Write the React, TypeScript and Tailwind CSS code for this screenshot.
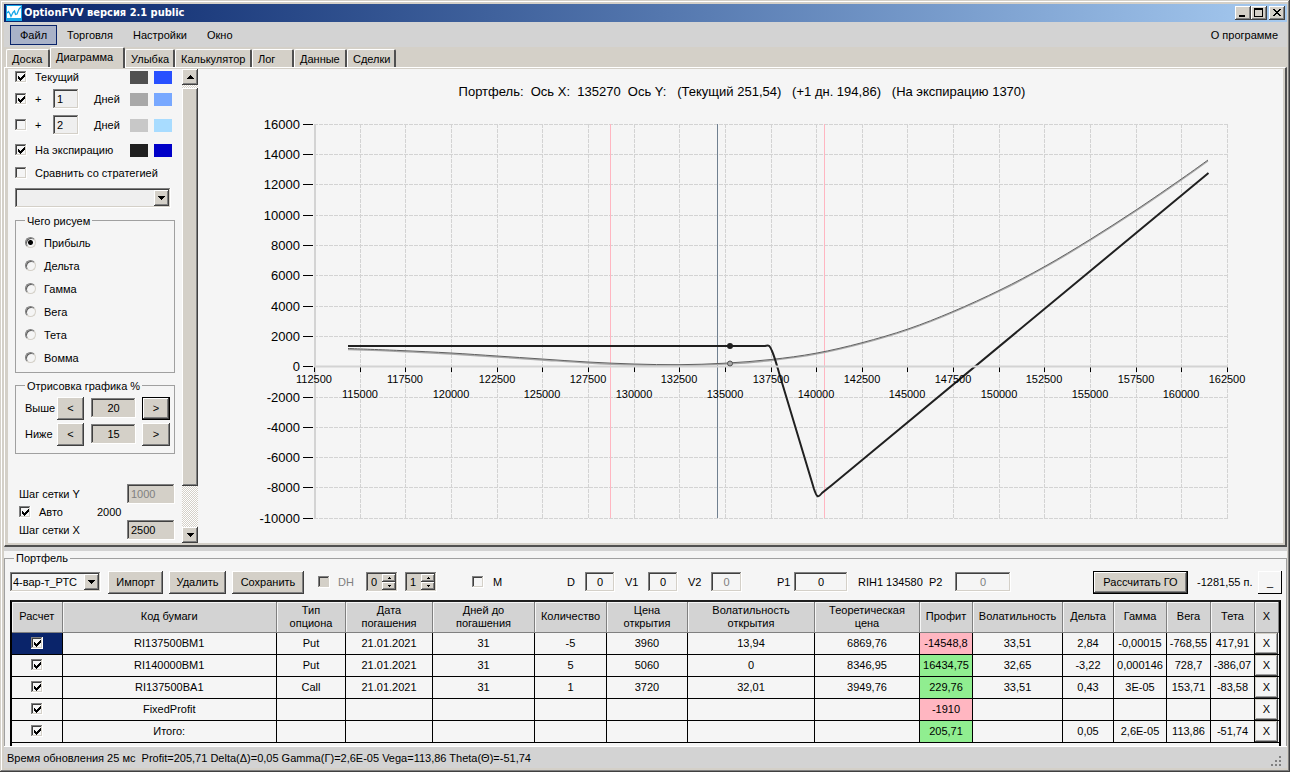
import { useState } from "react";
import type { ReactNode } from "react";
import { clsx } from "clsx";

const RAISED =
  "bg-[#d4d0c8] shadow-[inset_-1px_-1px_#404040,inset_1px_1px_#fff,inset_-2px_-2px_#808080,inset_2px_2px_#d4d0c8]";
const DEFAULT_BTN =
  "bg-[#d4d0c8] border border-black shadow-[inset_-1px_-1px_#404040,inset_1px_1px_#fff,inset_-2px_-2px_#808080]";
const SUNKEN =
  "shadow-[inset_-1px_-1px_#fff,inset_1px_1px_#808080,inset_-2px_-2px_#d4d0c8,inset_2px_2px_#404040]";

const MENU = ["Файл", "Торговля", "Настройки", "Окно"];

const TABS = [
  { name: "Доска", width: "w-11" },
  { name: "Диаграмма", width: "w-[75px]" },
  { name: "Улыбка", width: "w-[50px]" },
  { name: "Калькулятор", width: "w-[77px]" },
  { name: "Лог", width: "w-[42px]" },
  { name: "Данные", width: "w-[53px]" },
  { name: "Сделки", width: "w-[49px]" },
];

const MODES = ["Прибыль", "Дельта", "Гамма", "Вега", "Тета", "Вомма"];

const COLUMNS = [
  { title: "Расчет", width: "w-[50px]" },
  { title: "Код бумаги", width: "w-auto" },
  { title: "Тип\nопциона", width: "w-[69px]" },
  { title: "Дата\nпогашения", width: "w-[87px]" },
  { title: "Дней до\nпогашения", width: "w-[102px]" },
  { title: "Количество", width: "w-[72px]" },
  { title: "Цена\nоткрытия", width: "w-[81px]" },
  { title: "Волатильность\nоткрытия", width: "w-[127px]" },
  { title: "Теоретическая\nцена", width: "w-[105px]" },
  { title: "Профит", width: "w-[53px]" },
  { title: "Волатильность", width: "w-[90px]" },
  { title: "Дельта", width: "w-[51px]" },
  { title: "Гамма", width: "w-[53px]" },
  { title: "Вега", width: "w-[44px]" },
  { title: "Тета", width: "w-[44px]" },
  { title: "X", width: "w-[24px]" },
];

const ROWS = [
  ["RI137500BM1", "Put", "21.01.2021", "31", "-5", "3960", "13,94", "6869,76", "-14548,8", "33,51", "2,84", "-0,00015", "-768,55", "417,91"],
  ["RI140000BM1", "Put", "21.01.2021", "31", "5", "5060", "0", "8346,95", "16434,75", "32,65", "-3,22", "0,000146", "728,7", "-386,07"],
  ["RI137500BA1", "Call", "21.01.2021", "31", "1", "3720", "32,01", "3949,76", "229,76", "33,51", "0,43", "3E-05", "153,71", "-83,58"],
  ["FixedProfit", "", "", "", "", "", "", "", "-1910", "", "", "", "", ""],
  ["Итого:", "", "", "", "", "", "", "", "205,71", "", "0,05", "2,6E-05", "113,86", "-51,74"],
];
const PROFIT = 8;

interface CheckboxProps {
  id: string;
  label?: string;
  checked?: boolean;
  disabled?: boolean;
}

function Checkbox({ id, label, checked = false, disabled }: CheckboxProps) {
  const [on, setOn] = useState(checked);
  return (
    <span className="inline-grid size-3 shrink-0">
      <input
        id={id}
        type="checkbox"
        aria-label={label}
        checked={on}
        disabled={disabled}
        onChange={() => setOn(!on)}
        className={clsx("col-start-1 row-start-1 size-3 appearance-none", SUNKEN, disabled ? "bg-[#d4d0c8]" : "bg-[#f5f5f5]")}
      />
      {on && (
        <svg viewBox="0 0 12 12" className="pointer-events-none col-start-1 row-start-1 size-3" fill="#000" shapeRendering="crispEdges">
          <path d="M3 5h1v3h-1zM4 6h1v3h-1zM5 7h1v3h-1zM6 6h1v3h-1zM7 5h1v3h-1zM8 4h1v3h-1zM9 3h1v3h-1z" />
        </svg>
      )}
    </span>
  );
}

function Arrow({ up }: { up?: boolean }) {
  return (
    <svg width="7" height="4" viewBox="0 0 7 4" shapeRendering="crispEdges">
      <path d={up ? "M3 0h1v1h1v1h1v1h1v1h-7v-1h1v-1h1v-1h1z" : "M0 0h7v1h-1v1h-1v1h-1v1h-1v-1h-1v-1h-1v-1h-1z"} />
    </svg>
  );
}

function Combo({ label, options, className }: { label: string; options: string[]; className?: string }) {
  return (
    <span className={clsx("relative inline-flex h-5", className)}>
      <select aria-label={label} className={clsx("w-full appearance-none bg-transparent pl-[3px] pr-4 outline-none", SUNKEN)}>
        {options.map((o) => (
          <option key={o}>{o}</option>
        ))}
      </select>
      <span className={clsx("pointer-events-none absolute right-[2px] top-[2px] bottom-[2px] flex w-[15px] items-center justify-center", RAISED)}>
        <Arrow />
      </span>
    </span>
  );
}

function Field({ id, value, label, className, disabled }: { id: string; value: string; label?: string; className?: string; disabled?: boolean }) {
  return (
    <input
      id={id}
      type="text"
      aria-label={label}
      defaultValue={value}
      disabled={disabled}
      className={clsx("h-5 min-w-0 shrink-0 px-1 outline-none disabled:text-[#808080]", SUNKEN, className)}
    />
  );
}

function Button({ children, className, label }: { children: ReactNode; className?: string; label?: string }) {
  return (
    <button type="button" aria-label={label} className={clsx("flex h-[23px] shrink-0 items-center justify-center pb-px", className)}>
      {children}
    </button>
  );
}

function Spinner({ value, label }: { value: string; label: string }) {
  return (
    <span className={clsx("flex h-5 w-8 bg-[#d4d0c8] p-[2px]", SUNKEN)}>
      <input type="text" aria-label={label} defaultValue={value} className="w-[14px] min-w-0 bg-transparent pl-[3px] outline-none" />
      <span className="flex flex-1 flex-col">
        <button type="button" aria-label={`${label} +`} className={clsx("flex flex-1 items-center justify-center", RAISED)}>
          <svg width="3" height="2" viewBox="0 0 3 2" shapeRendering="crispEdges"><path d="M1 0h1v1h1v1h-3v-1h1z" /></svg>
        </button>
        <button type="button" aria-label={`${label} -`} className={clsx("flex flex-1 items-center justify-center", RAISED)}>
          <svg width="3" height="2" viewBox="0 0 3 2" shapeRendering="crispEdges"><path d="M0 0h3v1h-1v1h-1v-1h-1z" /></svg>
        </button>
      </span>
    </span>
  );
}

function TitleBar() {
  return (
    <header className="flex h-[18px] items-center bg-linear-to-r from-[#0a246a] to-[#a6caf0] px-[2px]">
      <svg width="16" height="16" viewBox="0 0 16 16" className="mr-[2px]">
        <rect width="16" height="16" fill="#18a8e8" />
        <rect x="1" y="1" width="14" height="12" fill="#fff" />
        <path d="M1 8l1.500-1.500L4 9l1 2.500 2-4L8.500 6l1 3.500L11 9l2-5 2-2" fill="none" stroke="#18a8e8" strokeWidth="1.3" />
      </svg>
      <h1 className="font-['DejaVu_Sans_Condensed','DejaVu_Sans',sans-serif] text-[11px] font-bold text-white">
        OptionFVV версия 2.1 public
      </h1>
      <div className="ml-auto flex">
        <button type="button" aria-label="Свернуть" className={clsx("h-[14px] w-4", RAISED)}>
          <svg viewBox="0 0 16 14" shapeRendering="crispEdges"><path d="M4 9h6v2H4z" /></svg>
        </button>
        <button type="button" aria-label="Развернуть" className={clsx("h-[14px] w-4", RAISED)}>
          <svg viewBox="0 0 16 14" shapeRendering="crispEdges"><path d="M3 2h9v9H3zM4 4v6h7V4z" fillRule="evenodd" /></svg>
        </button>
        <button type="button" aria-label="Закрыть" className={clsx("ml-[2px] h-[14px] w-4", RAISED)}>
          <svg viewBox="0 0 16 14" shapeRendering="crispEdges">
            <path d="M4 3h2v1h1v1h2v-1h1v-1h2v1h-1v1h-1v1h-1v1h1v1h1v1h1v1h-2v-1h-1v-1h-2v1h-1v1h-2v-1h1v-1h1v-1h1v-1h-1v-1h-1v-1h-1z" />
          </svg>
        </button>
      </div>
    </header>
  );
}

function MenuBar() {
  return (
    <nav className="flex h-[25px] items-center bg-[#d3d3d3] px-[6px] text-[11px]">
      {MENU.map((m, i) => (
        <button
          key={m}
          type="button"
          className={clsx("h-5 border px-[9px]", i === 0 ? "border-[#0a246a] bg-[#a9b2c8]" : "border-transparent")}
        >
          {m}
        </button>
      ))}
      <button type="button" className="ml-auto h-5 px-[3px]">О программе</button>
    </nav>
  );
}

function Swatches({ gray, blue }: { gray: string; blue: string }) {
  return (
    <span className="ml-auto mr-[10px] flex gap-[6px]">
      <span className={clsx("h-[13px] w-[18px]", gray)} />
      <span className={clsx("h-[13px] w-[18px]", blue)} />
    </span>
  );
}

function RangeRow({ name, value, focused }: { name: string; value: string; focused?: boolean }) {
  return (
    <div className="flex h-[26px] items-center">
      <label htmlFor={name} className="w-8">{name}</label>
      <Button label={`${name} меньше`} className={clsx("w-[27px]", RAISED)}>&lt;</Button>
      <Field id={name} value={value} className="ml-[7px] w-[45px] bg-[#d4d0c8] text-center" />
      <Button label={`${name} больше`} className={clsx("ml-[6px] w-7", focused ? DEFAULT_BTN : RAISED)}>&gt;</Button>
    </div>
  );
}

function Sidebar() {
  const [mode, setMode] = useState(MODES[0]);
  return (
    <aside className="flex w-[174px] shrink-0 flex-col pl-[7px]">
      <div className="flex h-4 items-center">
        <Checkbox id="current" checked />
        <label htmlFor="current" className="pl-2">Текущий</label>
        <Swatches gray="bg-[#505050]" blue="bg-[#2850ff]" />
      </div>
      <div className="mt-px flex h-[26px] items-center">
        <Checkbox id="plus1" checked />
        <label htmlFor="plus1" className="w-[26px] pl-2">+</label>
        <Field id="days1" value="1" className="w-[26px] bg-[#efefef]" />
        <label htmlFor="days1" className="pl-[15px]">Дней</label>
        <Swatches gray="bg-[#a8a8a8]" blue="bg-[#78a8ff]" />
      </div>
      <div className="flex h-[26px] items-center">
        <Checkbox id="plus2" />
        <label htmlFor="plus2" className="w-[26px] pl-2">+</label>
        <Field id="days2" value="2" className="w-[26px] bg-[#efefef]" />
        <label htmlFor="days2" className="pl-[15px]">Дней</label>
        <Swatches gray="bg-[#c8c8c8]" blue="bg-[#a8dcff]" />
      </div>
      <div className="flex h-6 items-center">
        <Checkbox id="expiry" checked />
        <label htmlFor="expiry" className="pl-2">На экспирацию</label>
        <Swatches gray="bg-[#202020]" blue="bg-[#0000c8]" />
      </div>
      <div className="flex h-[22px] items-center">
        <Checkbox id="compare" />
        <label htmlFor="compare" className="pl-2">Сравнить со стратегией</label>
      </div>
      <Combo label="Стратегия" options={[""]} className="mt-1 w-[156px] bg-[#efefef]" />

      <fieldset className="mt-[5px] w-40 min-w-0 border border-[#a0a0a0] px-[9px] pb-[3px] pt-1">
        <legend className="px-[2px] pt-[2px] leading-3">Чего рисуем</legend>
        {MODES.map((m) => (
          <label key={m} className="flex h-[23px] items-center gap-2">
            <input
              type="radio"
              name="mode"
              checked={mode === m}
              onChange={() => setMode(m)}
              className="size-[11px] appearance-none rounded-full border border-[#808080] border-r-[#d4d0c8] border-b-[#d4d0c8] bg-[#f5f5f5] shadow-[inset_1px_1px_#606060] checked:bg-[radial-gradient(circle,#000_2px,#f5f5f5_3px)]"
            />
            {m}
          </label>
        ))}
      </fieldset>

      <fieldset className="mt-[5px] w-40 min-w-0 border border-[#a0a0a0] pb-[6px] pl-[9px] pr-1 pt-[3px]">
        <legend className="px-[2px] pt-[2px] leading-3">Отрисовка графика %</legend>
        <RangeRow name="Выше" value="20" focused />
        <RangeRow name="Ниже" value="15" />
      </fieldset>

      <div className="mt-[30px] flex w-40 items-center justify-between pl-1">
        <label htmlFor="stepY">Шаг сетки Y</label>
        <Field id="stepY" value="1000" disabled className="w-12 bg-[#d4d0c8]" />
      </div>
      <div className="flex h-4 items-center pl-1">
        <Checkbox id="auto" checked />
        <label htmlFor="auto" className="w-[66px] pl-2">Авто</label>
        <span>2000</span>
      </div>
      <div className="flex w-40 items-center justify-between pl-1">
        <label htmlFor="stepX">Шаг сетки X</label>
        <Field id="stepX" value="2500" className="w-12 bg-[#d4d0c8]" />
      </div>
    </aside>
  );
}

function ScrollBar() {
  return (
    <div className="flex w-4 shrink-0 flex-col bg-[repeating-conic-gradient(#fff_0_25%,#d4d0c8_0_50%)] bg-[length:2px_2px]">
      <button type="button" aria-label="Вверх" className={clsx("mb-[3px] flex h-4 items-center justify-center", RAISED)}>
        <Arrow up />
      </button>
      <div className={clsx("mb-[41px] flex-1", RAISED)} />
      <button type="button" aria-label="Вниз" className={clsx("flex h-4 items-center justify-center", RAISED)}>
        <Arrow />
      </button>
    </div>
  );
}

const px = (v: number) => 314 + Math.round(((v - 112500) / 50000) * 913);
const py = (v: number) => Math.round(366.2 - (v / 2000) * 30.3);

const CURRENT = [
  [348, 348.5], [400, 350.5], [451, 353], [497, 356], [542, 359], [588, 362], [634, 364], [679, 364.7],
  [725, 363.2], [771, 359.5], [816, 353.2], [862, 342.7], [908, 329], [953, 311.5], [1000, 290],
  [1045, 266.3], [1090, 239.5], [1136, 210], [1182, 178.5], [1208, 160],
];

// Catmull-Rom through the points
function smooth(points: number[][]) {
  let d = `M${points[0][0]} ${points[0][1]}`;
  for (let i = 0; i < points.length - 1; i++) {
    const a = points[i - 1] ?? points[i];
    const b = points[i];
    const c = points[i + 1];
    const e = points[i + 2] ?? c;
    d += `C${b[0] + (c[0] - a[0]) / 6} ${b[1] + (c[1] - a[1]) / 6} ${c[0] - (e[0] - b[0]) / 6} ${c[1] - (e[1] - b[1]) / 6} ${c[0]} ${c[1]}`;
  }
  return d;
}

function Chart() {
  const xs = Array.from({ length: 21 }, (_, i) => 112500 + i * 2500);
  const ys = Array.from({ length: 14 }, (_, i) => 16000 - i * 2000);
  const curve = smooth(CURRENT);

  return (
    <svg viewBox="198 69 1085 474" className="h-[474px] min-w-0 flex-1 font-['Liberation_Sans',Arial,sans-serif]">
      <text x="742" y="96" fontSize="13" textAnchor="middle" className="whitespace-pre">
        {"Портфель:  Ось X:  135270  Ось Y:   (Текущий 251,54)   (+1 дн. 194,86)   (На экспирацию 1370)"}
      </text>

      <g shapeRendering="crispEdges" fill="none">
        <g stroke="#d3d3d3" strokeDasharray="4 1">
          {xs.map((v) => <path key={v} d={`M${px(v) + 0.5} 124V518`} />)}
          {ys.map((v) => <path key={v} d={`M314 ${py(v) + 0.5}H1228`} />)}
        </g>
        <path d="M315 124V519" stroke="#d3d3d3" strokeWidth="2" />
        <path d="M610.5 124V518M824.5 124V518" stroke="#ffb6c1" />
        <path d="M717.5 124V518" stroke="#708090" />
        {ys.map((v) => <path key={v} d={`M303 ${py(v) + 0.5}H313`} stroke="#000" />)}
        {xs.map((v) => <path key={v} d={`M${px(v) + 0.5} 367V372`} stroke="#000" />)}
      </g>

      <path d={curve} transform="translate(0 1)" fill="none" stroke="#a8a8a8" strokeWidth="1.3" />
      <path d={curve} fill="none" stroke="#606060" strokeWidth="1" />
      <path
        d="M348 346H765C769 344.500 770 346 772 351C775 358 777 366 780 376L814 489C817 498 818 498 822 493L832 485L1208.500 173"
        fill="none"
        stroke="#202020"
        strokeWidth="2"
      />
      <path d="M314 366.500H1228" stroke="#d3d3d3" strokeWidth="2" />
      <circle cx="730" cy="346" r="3" fill="#202020" />
      <circle cx="730" cy="363.500" r="2.500" fill="#a8a8a8" stroke="#505050" />

      {xs.map((v, i) => (
        <text key={v} x={px(v)} y={i % 2 ? 398 : 383} fontSize="11" textAnchor="middle">{v}</text>
      ))}
      {ys.map((v) => (
        <text key={v} x="300" y={py(v) + 5} fontSize="13" textAnchor="end">{v}</text>
      ))}
    </svg>
  );
}

function Toolbar() {
  return (
    <div className="flex h-[26px] items-center">
      <Combo label="Портфель" options={["4-вар-т_РТС"]} className="w-[91px]" />
      <Button className={clsx("ml-[7px] w-[55px]", RAISED)}>Импорт</Button>
      <Button className={clsx("ml-[6px] w-[57px]", RAISED)}>Удалить</Button>
      <Button className={clsx("ml-[6px] w-[72px]", RAISED)}>Сохранить</Button>
      <div className="ml-[14px] flex w-12 items-center gap-2 text-[#808080]">
        <Checkbox id="dh" disabled />
        <label htmlFor="dh">DH</label>
      </div>
      <div className="flex gap-[7px]">
        <Spinner label="DH от" value="0" />
        <Spinner label="DH до" value="1" />
      </div>
      <div className="ml-[35px] flex w-[95px] items-center gap-[9px]">
        <Checkbox id="m" />
        <label htmlFor="m">M</label>
      </div>
      <label htmlFor="d" className="w-[18px]">D</label>
      <Field id="d" value="0" className="w-[30px] text-center" />
      <label htmlFor="v1" className="w-[33px] pl-[10px]">V1</label>
      <Field id="v1" value="0" className="w-[30px] text-center" />
      <label htmlFor="v2" className="w-[33px] pl-[10px]">V2</label>
      <Field id="v2" value="0" disabled className="w-[31px] text-center" />
      <label htmlFor="p1" className="w-[52px] pl-[35px]">P1</label>
      <Field id="p1" value="0" className="w-[54px] text-center" />
      <span className="w-[81px] whitespace-nowrap pl-[10px]">RIH1 134580</span>
      <label htmlFor="p2" className="w-[26px]">P2</label>
      <Field id="p2" value="0" disabled className="w-[56px] text-center" />
      <Button className={clsx("ml-auto w-[95px]", DEFAULT_BTN)}>Рассчитать ГО</Button>
      <span className="w-[70px] shrink-0 whitespace-nowrap pl-[9px]">-1281,55 п.</span>
      <Button label="Свернуть портфель" className="w-6 bg-[#f5f5f5] shadow-[inset_-1px_-1px_#000,inset_1px_1px_#fff]">_</Button>
    </div>
  );
}

function PortfolioTable() {
  return (
    <div className="mr-[5px] flex-1 border-x-2 border-t-2 border-black border-t-[#202020]">
      <table className="w-full table-fixed border-collapse text-center">
        <colgroup>
          {COLUMNS.map((c, i) => <col key={i} className={c.width} />)}
        </colgroup>
        <thead>
          <tr className="h-[30px] bg-[#d3d3d3]">
            {COLUMNS.map((c, i) => (
              <th
                key={i}
                className="whitespace-pre-line border-b border-r border-[#808080] p-0 font-normal leading-[13px] shadow-[inset_1px_1px_#f5f5f5]"
              >
                {c.title}
              </th>
            ))}
          </tr>
        </thead>
        <tbody>
          {ROWS.map((row, r) => (
            <tr key={row[0]} className="h-[22px]">
              <td className={clsx("border-b border-r border-black p-0", r === 0 && "bg-[#0a246a]")}>
                <span className="flex items-center justify-center">
                  <Checkbox id={`row${r}`} label={row[0]} checked />
                </span>
              </td>
              {row.map((cell, i) => (
                <td
                  key={i}
                  className={clsx(
                    "border-b border-r border-black p-0 leading-4",
                    i === PROFIT && (cell.startsWith("-") ? "bg-[#ffb6c1]" : "bg-[#90ee90]"),
                  )}
                >
                  {cell}
                </td>
              ))}
              <td className="border-b border-black p-0">
                <button
                  type="button"
                  aria-label={`Удалить ${row[0]}`}
                  className="block h-[21px] w-[23px] bg-[#f5f5f5] shadow-[inset_-1px_-1px_#404040,inset_1px_1px_#d4d0c8,inset_-2px_-2px_#a0a0a0]"
                >
                  X
                </button>
              </td>
            </tr>
          ))}
        </tbody>
      </table>
    </div>
  );
}

export default function App() {
  const [tab, setTab] = useState("Диаграмма");

  return (
    <div className="flex min-h-screen flex-col bg-[#d4d0c8] p-1 pr-[3px] font-['Liberation_Sans',Arial,sans-serif] text-[11px] leading-[14px] text-black shadow-[inset_-1px_-1px_#404040,inset_1px_1px_#d4d0c8,inset_-2px_-2px_#808080,inset_2px_2px_#fff]">
      <TitleBar />
      <MenuBar />

      <div className="flex h-5 items-end pl-[2px]">
        {TABS.map((t) => (
          <button
            key={t.name}
            type="button"
            onClick={() => setTab(t.name)}
            className={clsx(
              "rounded-t-[2px] border-l border-t border-r-2 border-l-white border-t-white border-r-[#505050] pl-[5px] text-left",
              t.width,
              t.name === tab ? "z-10 -mb-px h-[21px] bg-[#d4d0c8] pb-[2px]" : "h-[18px]",
            )}
          >
            {t.name}
          </button>
        ))}
      </div>

      <main className="flex flex-1 border-l border-t border-b-2 border-r-2 border-l-white border-t-white border-b-[#505050] border-r-[#505050] pb-[2px] pl-[3px] pr-[2px] pt-px">
        <div className="flex min-w-0 flex-1 bg-[#f5f5f5]">
          <Sidebar />
          <ScrollBar />
          <Chart />
        </div>
      </main>

      <div className="h-1 bg-[#d3d3d3]" />
      <section className="bg-[#f5f5f5]">
        <fieldset className="flex h-[195px] min-w-0 flex-col border border-b-0 border-[#a0a0a0] pl-[5px]">
          <legend className="ml-1 px-[2px] leading-[14px]">Портфель</legend>
          <div className="pb-[5px] pr-1 pt-[4px]">
            <Toolbar />
          </div>
          <PortfolioTable />
        </fieldset>
      </section>

      <footer className="flex h-[22px] items-center justify-between border-t border-white bg-[#d3d3d3] pl-[3px] text-[11px]">
        <span className="whitespace-pre">
          {"Время обновления 25 мс  Profit=205,71 Delta(Δ)=0,05 Gamma(Γ)=2,6E-05 Vega=113,86 Theta(Θ)=-51,74"}
        </span>
        <svg width="12" height="12" viewBox="0 0 12 12" className="mr-1 self-end" fill="#808080">
          <path d="M8 0h2v2H8zM8 4h2v2H8zM4 4h2v2H4zM8 8h2v2H8zM4 8h2v2H4zM0 8h2v2H0z" />
        </svg>
      </footer>
    </div>
  );
}
